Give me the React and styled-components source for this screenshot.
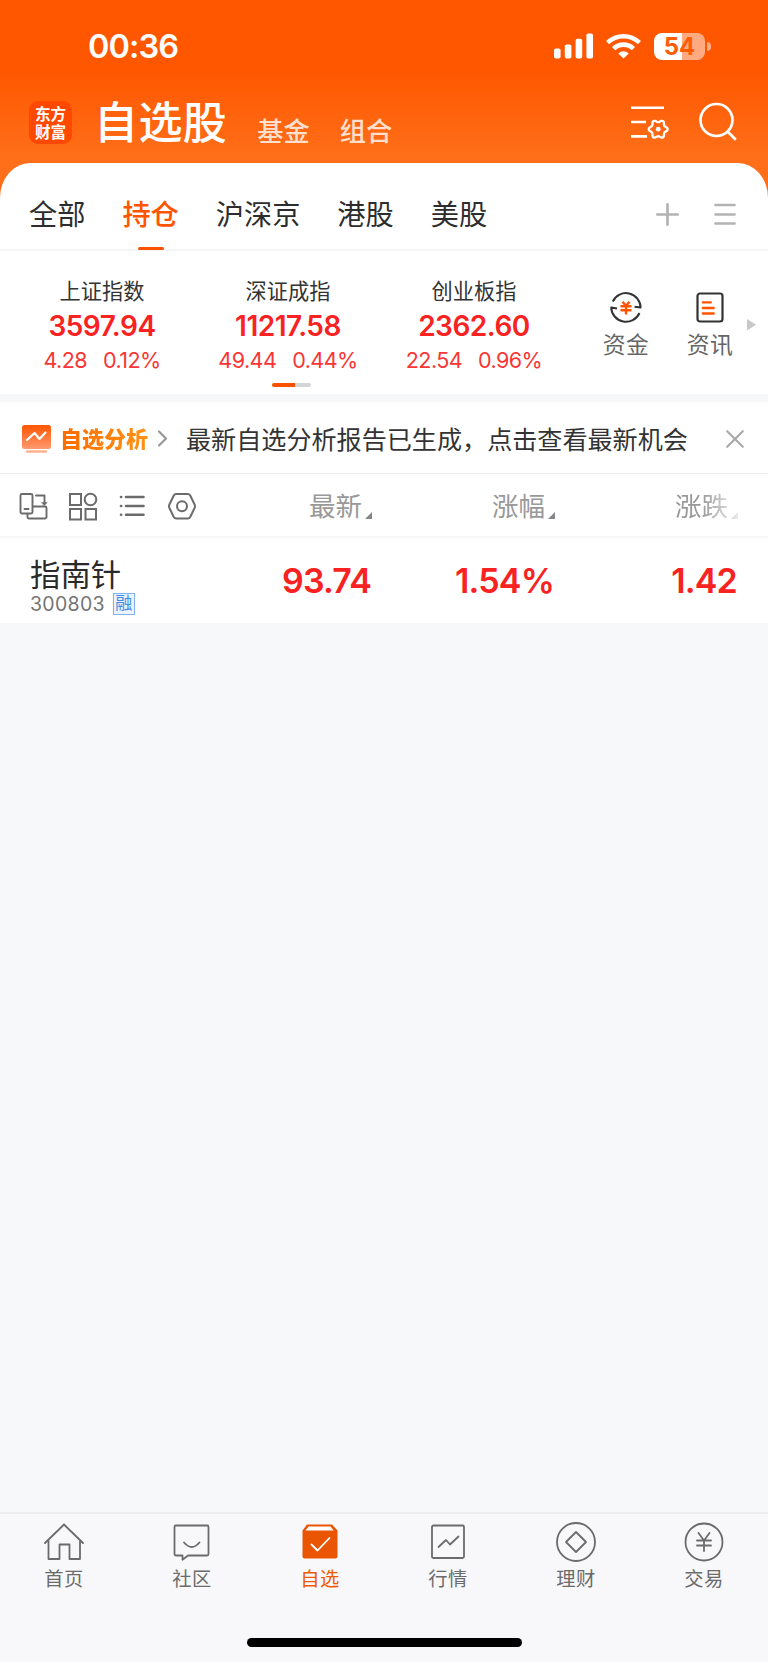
import React from "react";
import styled, { createGlobalStyle, css } from "styled-components";

const GlobalStyle = createGlobalStyle`
  * {
    box-sizing: border-box;
  }

  body {
    margin: 0;
    background: #f6f7f9;
    font-family: Inter, "Noto Sans CJK SC", sans-serif;
    color: #333;
  }

  svg {
    display: block;
    flex: none;
    overflow: visible;
  }
`;

const Page = styled.div`
  display: flex;
  flex-direction: column;
  width: 768px;
  height: 1662px;
  overflow: hidden;
  white-space: nowrap;
  background: linear-gradient(#ff5600 0, #ff5600 68px, #ff6e18 155px, #ff6e18 210px, #f6f8fa 210px);
`;

/* status bar */

const StatusBar = styled.div`
  display: flex;
  align-items: center;
  height: 84px;
  padding: 8px 57px 0 88px;
`;

const Clock = styled.div`
  flex: 1;
  padding-top: 1px;
  font-size: 32.5px;
  font-weight: 600;
  line-height: 40px;
  letter-spacing: -0.9px;
  color: #fff;
`;

const Battery = styled.div`
  display: flex;
  align-items: center;
  justify-content: center;
  width: 51px;
  height: 27px;
  margin-left: 13px;
  border-radius: 8px;
  background: linear-gradient(90deg, #fff 54%, #ffaa80 54%);
  color: #ff5c08;
  font-size: 24px;
  font-weight: 700;
  line-height: 27px;
`;

const BatteryTip = styled.div`
  width: 4px;
  height: 9px;
  margin-left: 2px;
  border-radius: 0 5px 5px 0;
  background: #ffaa80;
`;

/* header */

const NavBar = styled.div`
  display: flex;
  align-items: flex-start;
  height: 79px;
  padding: 17px 31px 0 29px;
`;

const Logo = styled.div`
  width: 43px;
  height: 43px;
  padding-top: 3px;
  border-radius: 9px;
  background: #ff4800;
`;

const LogoLine = styled.div`
  color: #fff;
  font-family: "Noto Sans CJK SC", sans-serif;
  font-size: 15.6px;
  font-weight: 700;
  line-height: 18px;
  text-align: center;
`;

const Title = styled.h1`
  margin: -1px 0 0 22px;
  color: #fff;
  font-size: 44px;
  font-weight: 500;
  line-height: 46px;
  letter-spacing: 0.4px;
`;

const NavLink = styled.div`
  margin: 14px 0 0 30px;
  color: #ffdfcd;
  font-size: 26.3px;
  font-weight: 500;
  line-height: 34px;
`;

const NavTools = styled.div`
  display: flex;
  gap: 30px;
  margin: 3px 0 0 auto;
`;

/* white panel */

const Panel = styled.div`
  height: 231px;
  border-radius: 30px 30px 0 0 / 35px 35px 0 0;
  background: #fff;
`;

const Tabs = styled.div`
  display: flex;
  gap: 37px;
  height: 88px;
  padding: 32px 32px 0 29px;
  border-bottom: 2px solid #f5f5f7;
`;

const Tab = styled.div`
  display: flex;
  flex-direction: column;
  align-items: center;
  color: ${({ $active }) => ($active ? "#ff5500" : "#2d2d2d")};
  font-size: 28.2px;
  font-weight: ${({ $active }) => ($active ? 500 : 400)};
  line-height: 41px;

  ${({ $active }) =>
    $active &&
    css`
      &::after {
        content: "";
        width: 26px;
        height: 3px;
        flex: none;
        margin-top: 11px;
        border-radius: 2px;
        background: #f85200;
      }
    `}
`;

const TabTools = styled.div`
  display: flex;
  gap: 35px;
  margin: 8px 0 0 auto;
`;

const IndexBar = styled.div`
  display: flex;
  height: 143px;
  padding-left: 9px;
`;

const IndexCard = styled.div`
  width: 186px;
  padding-top: 24px;
  text-align: center;
`;

const IndexName = styled.div`
  font-size: 21.2px;
  line-height: 32px;
`;

const IndexValue = styled.div`
  margin-top: 2px;
  color: #f82222;
  font-size: 28px;
  font-weight: 600;
  line-height: 34px;
  letter-spacing: -0.5px;
`;

const IndexChange = styled.div`
  display: flex;
  justify-content: center;
  gap: 16px;
  margin-top: 3px;
  color: #f93636;
  font-size: 21.6px;
  line-height: 28px;
  letter-spacing: -0.6px;
`;

const Pager = styled.div`
  width: 39px;
  height: 4px;
  margin: 9px auto 0;
  border-radius: 2px;
  background: linear-gradient(90deg, #f85200 60%, #d3d5d9 60%);
  transform: translateX(3px);
`;

const Shortcut = styled.div`
  display: flex;
  flex-direction: column;
  align-items: center;
  width: 84px;
  padding-top: 40px;
  color: #666;
  font-size: 22.8px;
  line-height: 34px;
  letter-spacing: 0.5px;

  svg {
    margin-bottom: 5px;
  }
`;

const Shortcuts = styled.div`
  display: flex;
  margin-left: 17px;
`;

/* analysis banner */

const Banner = styled.div`
  display: flex;
  align-items: center;
  height: 72px;
  margin-top: 8px;
  padding: 2px 24px 0 22px;
  border-bottom: 1px solid #ebebed;
  background: #fff;
`;

const BannerTag = styled.div`
  margin: 0 9px 0 9px;
  background: linear-gradient(100deg, #ff6a00, #ff9415);
  background-clip: text;
  color: transparent;
  font-size: 22px;
  font-weight: 800;
  line-height: 32px;
`;

const BannerText = styled.div`
  flex: 1;
  margin: 2px 0 0 18px;
  font-size: 25.1px;
  line-height: 36px;
`;

/* stock table */

const TableHead = styled.div`
  display: flex;
  align-items: center;
  height: 64px;
  padding: 2px 0 0 19px;
  border-bottom: 2px solid #f7f7f9;
  background: #fff;
`;

const ViewTools = styled.div`
  display: flex;
  align-items: center;
  width: 180px;
`;

const HeadCell = styled.div`
  display: flex;
  align-items: flex-end;
  justify-content: flex-end;
  gap: 3px;
  width: ${({ $width }) => $width}px;
  color: #999;
  font-size: 26.5px;
  line-height: 38px;

  &::after {
    content: "";
    margin-bottom: 6px;
    border-bottom: 7px solid #85858a;
    border-left: 7px solid transparent;
  }

  ${({ $fade }) =>
    $fade &&
    css`
      mask-image: linear-gradient(90deg, #000 calc(100% - 36px), transparent 104%);
    `}
`;

const StockRow = styled.div`
  display: flex;
  height: 85px;
  padding-left: 30px;
  background: #fff;
`;

const StockInfo = styled.div`
  width: 160px;
  padding-top: 17px;
`;

const StockName = styled.div`
  color: #2a2a2a;
  font-size: 30.4px;
  line-height: 40px;
`;

const StockCode = styled.div`
  display: flex;
  align-items: center;
  gap: 8px;
  margin-top: -2px;
  color: #757575;
  font-size: 19.5px;
  line-height: 22px;
  letter-spacing: 0.3px;
`;

const MarginTag = styled.span`
  width: 22px;
  height: 22px;
  border: 1px solid #7fb3ee;
  background: #eaf3ff;
  color: #3d8be0;
  font-size: 17px;
  line-height: 19px;
  text-align: center;
`;

const StockValue = styled.div`
  width: ${({ $width }) => $width}px;
  padding-top: 20px;
  color: #f82222;
  font-size: 34px;
  font-weight: 600;
  line-height: 46px;
  letter-spacing: -0.8px;
  text-align: right;
`;

/* bottom navigation */

const BottomNav = styled.nav`
  display: flex;
  height: 150px;
  margin-top: auto;
  border-top: 2px solid #ebecee;
  background: #f8f8fa;
`;

const BottomItem = styled.div`
  display: flex;
  flex: 1;
  flex-direction: column;
  align-items: center;
  padding-top: 8px;
  color: ${({ $active }) => ($active ? "#f05a00" : "#6b6b6b")};
  font-size: 19.3px;
  line-height: 28px;
  letter-spacing: 0.4px;

  svg {
    margin-bottom: 3px;
  }
`;

const HomeIndicator = styled.div`
  position: absolute;
  top: 1638px;
  left: 247px;
  width: 275px;
  height: 9px;
  border-radius: 5px;
  background: #000;
`;

const Icon = ({ w, h, children, color = "#6b6b6b", stroke = 2, ...rest }) => (
  <svg
    width={w}
    height={h}
    viewBox={`0 0 ${w} ${h}`}
    fill="none"
    stroke={color}
    strokeWidth={stroke}
    strokeLinecap="round"
    strokeLinejoin="round"
    {...rest}
  >
    {children}
  </svg>
);

// six-lobed gear outline
const gearPoints = (cx, cy, radius, depth) =>
  Array.from({ length: 72 }, (_, i) => {
    const angle = (i * Math.PI) / 36;
    const r = radius + depth * Math.cos(6 * angle);
    return `${(cx + r * Math.cos(angle)).toFixed(2)},${(cy + r * Math.sin(angle)).toFixed(2)}`;
  }).join(" ");

const SignalIcon = () => (
  <Icon w={39} h={26} fill="#fff" stroke={0}>
    <rect x="0" y="15.5" width="6.6" height="10" rx="1.8" />
    <rect x="10.8" y="11.5" width="6.6" height="14" rx="1.8" />
    <rect x="21.6" y="5.8" width="6.6" height="19.7" rx="1.8" />
    <rect x="32.4" y="0.5" width="6.6" height="25" rx="1.8" />
  </Icon>
);

const WifiIcon = styled(Icon)`
  margin-left: 13px;
`;

const FilterIcon = () => (
  <Icon w={38} h={36} color="#fff" stroke={2.6} strokeLinecap="butt">
    <path d="M0 3.8h33M0 18h15M0 32.4h16" />
    <polygon points={gearPoints(27.2, 25.2, 8.2, 1.25)} strokeWidth="2.3" />
    <circle cx="27.2" cy="25.2" r="2.4" fill="#fff" stroke="none" />
  </Icon>
);

const SearchIcon = () => (
  <Icon w={38} h={38} color="#fff" stroke={2.7} strokeLinecap="butt">
    <circle cx="17.5" cy="16" r="16" />
    <path d="M28.5 27.5l8.3 8.3" />
  </Icon>
);

const PlusIcon = () => (
  <Icon w={23} h={23} color="#b3b3b3" stroke={2.7}>
    <path d="M11.5 1.3v20.4M1.3 11.5h20.4" />
  </Icon>
);

const MenuIcon = () => (
  <Icon w={22} h={23} color="#b3b3b3" stroke={2.7}>
    <path d="M1.5 2h19M1.5 11.5h19M1.5 20.5h19" />
  </Icon>
);

const FundIcon = () => (
  <Icon w={34} h={32} color="#333" stroke={2} strokeLinecap="butt">
    <path d="M3.8 10.500A14.600 14.600 0 0 1 31.600 16.600l-6-.9" />
    <path d="M8 17.600l-5.800-1.200A14.800 14.800 0 0 0 30.500 22" />
    <path
      d="M13.500 10.800l3.500 4 3.500-4M11.500 15.300h11M11.500 19.300h11M17 15v8.500"
      stroke="#ff5500"
      strokeWidth="2.400"
    />
  </Icon>
);

const NewsIcon = () => (
  <Icon w={28} h={32} color="#333" stroke={2.2}>
    <rect x="1.5" y="2.5" width="25" height="28" rx="2.5" />
    <path d="M6.800 11.400h8M6.800 17h11M6.800 22.500h11" stroke="#ff5500" strokeWidth="2.300" />
  </Icon>
);

const ChartBadge = () => (
  <Icon w={29} h={28} stroke={0}>
    <defs>
      <linearGradient id="badge" x1="0" y1="0" x2="0" y2="1">
        <stop offset="0" stopColor="#ff5500" />
        <stop offset="1" stopColor="#ff9a70" />
      </linearGradient>
    </defs>
    <rect width="29" height="24" rx="2.5" fill="url(#badge)" />
    <rect x="4" y="25.300" width="21" height="2.400" rx="1" fill="#ffb08c" />
    <path d="M5 15l7.500-7 5 6 6-6.500" stroke="#fff" strokeWidth="2.200" />
  </Icon>
);

const ViewIcon = styled(Icon)`
  margin-left: ${({ $gap }) => $gap || 0}px;
`;

const MoreArrow = styled(Icon)`
  margin: 68px 0 0 -5px;
`;

const navItems = [
  {
    label: "首页",
    icon: <path d="M1 21L20 2.500 39 21M4.500 18v19h11V22.500h10V37h10.500V18" />,
  },
  {
    label: "社区",
    icon: (
      <>
        <path d="M4 3.500h31a1.500 1.500 0 0 1 1.500 1.500v27a1.500 1.500 0 0 1-1.500 1.500H16l-5.500 4.300v-4.300H4A1.500 1.500 0 0 1 2.500 32V5A1.500 1.500 0 0 1 4 3.500z" />
        <path d="M12 20.500q7.800 9 15.500 0" />
      </>
    ),
  },
  {
    label: "自选",
    active: true,
    icon: (
      <>
        <path d="M7 2.500h25l5.500 6v26a2 2 0 0 1-2 2H4.500a2 2 0 0 1-2-2v-26z" fill="#ea5504" stroke="none" />
        <path d="M8.500 4.400h22l3.200 4H5.500z" fill="#fff" stroke="none" />
        <path d="M11.500 22.500l6 6 12-12.500" stroke="#fff" />
      </>
    ),
  },
  {
    label: "行情",
    icon: (
      <>
        <rect x="4" y="3.500" width="32" height="32.500" rx="1.500" />
        <path d="M10.500 25l7.500-7 4 4.500 8.500-8" />
      </>
    ),
  },
  {
    label: "理财",
    icon: (
      <>
        <circle cx="20" cy="20" r="19" />
        <path d="M20 10l10 10-10 10-10-10z" />
      </>
    ),
  },
  {
    label: "交易",
    icon: (
      <>
        <circle cx="20" cy="20" r="18.500" />
        <path d="M14.500 11l5.500 7.500 5.500-7.500M13 18.500h14M13 23.500h14M20 18.500v10.500" />
      </>
    ),
  },
];

const tabs = ["全部", "持仓", "沪深京", "港股", "美股"];

const indexes = [
  { name: "上证指数", value: "3597.94", change: "4.28", percent: "0.12%" },
  { name: "深证成指", value: "11217.58", change: "49.44", percent: "0.44%", pager: true },
  { name: "创业板指", value: "2362.60", change: "22.54", percent: "0.96%" },
];

const App = () => {
  return (
    <Page>
      <GlobalStyle />
      <StatusBar>
        <Clock>00:36</Clock>
        <SignalIcon />
        <WifiIcon w={35} h={26} color="#fff" stroke={4.6} strokeLinecap="butt">
          <path d="M1.6 9.6a23 23 0 0 1 31.8 0" />
          <path d="M7.6 15.6a14.3 14.3 0 0 1 19.8 0" />
          <path d="M17.5 25.600l-5.200-5.200a7.500 7.500 0 0 1 10.400 0z" fill="#fff" stroke="none" />
        </WifiIcon>
        <Battery>54</Battery>
        <BatteryTip />
      </StatusBar>

      <NavBar>
        <Logo>
          <LogoLine>东方</LogoLine>
          <LogoLine>财富</LogoLine>
        </Logo>
        <Title>自选股</Title>
        <NavLink>基金</NavLink>
        <NavLink>组合</NavLink>
        <NavTools>
          <FilterIcon />
          <SearchIcon />
        </NavTools>
      </NavBar>

      <Panel>
        <Tabs>
          {tabs.map((tab) => (
            <Tab key={tab} $active={tab === "持仓"}>
              {tab}
            </Tab>
          ))}
          <TabTools>
            <PlusIcon />
            <MenuIcon />
          </TabTools>
        </Tabs>
        <IndexBar>
          {indexes.map((item) => (
            <IndexCard key={item.name}>
              <IndexName>{item.name}</IndexName>
              <IndexValue>{item.value}</IndexValue>
              <IndexChange>
                <span>{item.change}</span>
                <span>{item.percent}</span>
              </IndexChange>
              {item.pager && <Pager />}
            </IndexCard>
          ))}
          <Shortcuts>
            <Shortcut>
              <FundIcon />
              资金
            </Shortcut>
            <Shortcut>
              <NewsIcon />
              资讯
            </Shortcut>
          </Shortcuts>
          <MoreArrow w={9} h={12} fill="#c8c8c8" stroke={0}>
            <path d="M0 0l9 5.800L0 11.600z" />
          </MoreArrow>
        </IndexBar>
      </Panel>

      <Banner>
        <ChartBadge />
        <BannerTag>自选分析</BannerTag>
        <Icon w={11} h={17} color="#999" stroke={2.2}>
          <path d="M2 1.500l7 7-7 7" />
        </Icon>
        <BannerText>最新自选分析报告已生成，点击查看最新机会</BannerText>
        <Icon w={18} h={18} color="#aaa" stroke={2.2}>
          <path d="M1.200 1.200l15.600 15.600M16.800 1.200L1.200 16.800" />
        </Icon>
      </Banner>

      <TableHead>
        <ViewTools>
          <ViewIcon w={28} h={28} stroke={1.9}>
            <rect x="1.500" y="2" width="12" height="19.500" rx="1.500" />
            <path d="M5.500 17h4M17 3.500h8.500v8" />
            <path d="M22.800 10.500h5.200l-2.600 3z" fill="#6b6b6b" strokeWidth="0.600" />
            <path d="M14 14.500h12a1.500 1.500 0 0 1 1.500 1.500v9a1.500 1.500 0 0 1-1.500 1.500H10a1.500 1.500 0 0 1-1.500-1.500v-3" />
          </ViewIcon>
          <ViewIcon w={29} h={29} strokeLinejoin="miter" $gap={21}>
            <path d="M2 2h11v11H2zM2 17h11v10.500H2zM17.500 17H28v10.500H17.500z" />
            <circle cx="22.500" cy="7.500" r="5.800" />
          </ViewIcon>
          <ViewIcon w={26} h={24} stroke={2.6} $gap={22}>
            <path d="M7 3h17.500M7 12h17.500M7 20.800h17.500M2 3h.2M2 12h.2M2 20.800h.2" />
          </ViewIcon>
          <ViewIcon w={28} h={27} $gap={23}>
            <path d="M8.200 1h11.600q1.500 0 2.300 1.300l4.600 9.500q.6 1.400 0 2.900l-4.600 9.500q-.8 1.300-2.300 1.300H8.200q-1.500 0-2.300-1.300l-4.600-9.500q-.6-1.500 0-2.900l4.600-9.500q.8-1.300 2.300-1.300z" />
            <circle cx="14" cy="13.200" r="5" />
          </ViewIcon>
        </ViewTools>
        <HeadCell $width={173}>最新</HeadCell>
        <HeadCell $width={183}>涨幅</HeadCell>
        <HeadCell $width={183} $fade>
          涨跌
        </HeadCell>
      </TableHead>
      <StockRow>
        <StockInfo>
          <StockName>指南针</StockName>
          <StockCode>
            300803
            <MarginTag>融</MarginTag>
          </StockCode>
        </StockInfo>
        <StockValue $width={181}>93.74</StockValue>
        <StockValue $width={183}>1.54%</StockValue>
        <StockValue $width={183}>1.42</StockValue>
      </StockRow>

      <BottomNav>
        {navItems.map(({ label, icon, active }) => (
          <BottomItem key={label} $active={active}>
            <Icon w={40} h={40} stroke={1.8}>
              {icon}
            </Icon>
            {label}
          </BottomItem>
        ))}
      </BottomNav>
      <HomeIndicator />
    </Page>
  );
};

export default App;
